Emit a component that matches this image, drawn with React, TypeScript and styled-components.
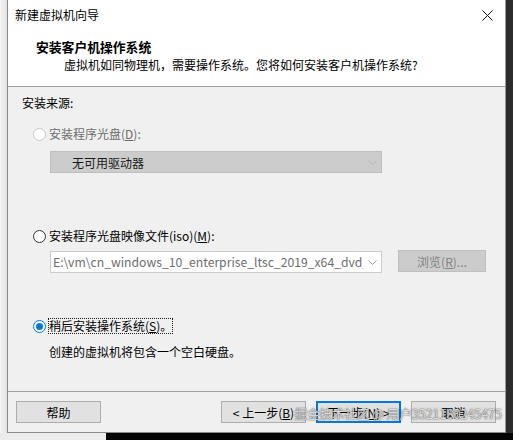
import React, {useState} from 'react'
import styled, {createGlobalStyle} from 'styled-components'

const GlobalStyle = createGlobalStyle`
  html, body {
    margin: 0;
    padding: 0;
    background: #1b1b1b;
  }
  body {
    font-family: "Segoe UI", "Noto Sans CJK SC", "Liberation Sans", sans-serif;
    font-size: 12px;
    color: #000;
  }
`

const ScreenStl = styled.div`
  width: 513px;
  height: 440px;
  display: grid;
  grid-template-columns: 7px 499px 1fr;
  grid-template-rows: 433px 1fr;
  overflow: hidden;
  position: relative;
`

const LeftShadeStl = styled.div`
  background: linear-gradient(to right, #f3f3f3, #e4e4e4);
`

const RightDeskStl = styled.div`
  background: #2c2c2c;
`

const BottomStripStl = styled.div`
  grid-column: 1 / 4;
  display: flex;
`

const BottomPartStl = styled.div<{light?: boolean; w?: number}>`
  flex: ${({w}) => (w ? `0 0 ${w}px` : '1')};
  background: ${({light}) => (light ? '#ececec' : '#050505')};
`

const WindowStl = styled.div`
  display: flex;
  flex-direction: column;
  border-left: 1px solid #8a8a8a;
  border-right: 1px solid #9a9a9a;
  border-bottom: 1px solid #8a8a8a;
  background: #f0f0f0;
`

const HeaderStl = styled.div`
  background: #fff;
  border-bottom: 1px solid #a0a0a0;
  height: 87px;
  box-sizing: border-box;
  display: flex;
  flex-direction: column;
`

const TitleBarStl = styled.div`
  height: 29px;
  display: flex;
  align-items: center;
  justify-content: space-between;
  padding: 0 10px 0 7px;
`

const TitleTextStl = styled.span`
  line-height: 16px;
`

const CloseStl = styled.div`
  width: 16px;
  height: 16px;
  display: flex;
  align-items: center;
  justify-content: center;
  margin-top: 1px;
`

const HeadTitleStl = styled.div`
  font-weight: 700;
  font-size: 12.8px;
  line-height: 16px;
  padding-left: 28px;
  margin-top: 10px;
`

const HeadSubStl = styled.div`
  line-height: 16px;
  padding-left: 56px;
  margin-top: 2px;
`

const BodyStl = styled.div`
  flex: 1;
  padding: 8px 0 0 14px;
  display: flex;
  flex-direction: column;
  border-bottom: 1px solid #a0a0a0;
`

const LegendStl = styled.div`
  line-height: 16px;
`

const OptionStl = styled.div<{gap: number}>`
  margin-top: ${({gap}) => gap}px;
  padding-left: 11px;
  display: flex;
  flex-direction: column;
`

const RadioRowStl = styled.label<{disabled?: boolean}>`
  display: flex;
  align-items: center;
  height: 16px;
  gap: 3px;
  color: ${({disabled}) => (disabled ? '#6d6d6d' : '#000')};
`

const RadioDotStl = styled.span<{checked?: boolean; disabled?: boolean}>`
  width: 13px;
  height: 13px;
  box-sizing: border-box;
  border-radius: 50%;
  background: #fff;
  border: 1px solid ${({checked, disabled}) => (disabled ? '#c8c8c8' : checked ? '#0078d7' : '#333')};
  display: flex;
  align-items: center;
  justify-content: center;
  &::after {
    content: '';
    width: 7px;
    height: 7px;
    border-radius: 50%;
    background: ${({checked}) => (checked ? '#0078d7' : 'transparent')};
  }
`

const LabelTextStl = styled.span<{focused?: boolean}>`
  line-height: 14px;
  outline: ${({focused}) => (focused ? '1px dotted #222' : 'none')};
  outline-offset: 0;
`

const KeyStl = styled.span`
  text-decoration: underline;
  text-underline-offset: 1px;
`

const FieldRowStl = styled.div<{gap: number}>`
  margin-top: ${({gap}) => gap}px;
  padding-left: 28px;
  display: flex;
  align-items: center;
  gap: 16px;
`

const ComboStl = styled.div<{disabled?: boolean}>`
  width: 332px;
  height: 22px;
  box-sizing: border-box;
  border: 1px solid ${({disabled}) => (disabled ? '#bfbfbf' : '#cccccc')};
  background: ${({disabled}) => (disabled ? '#cccccc' : '#ffffff')};
  display: flex;
  align-items: center;
  justify-content: space-between;
  overflow: hidden;
`

const ComboTextStl = styled.span<{indent: number; muted?: boolean}>`
  padding-left: ${({indent}) => indent}px;
  white-space: nowrap;
  overflow: hidden;
  flex: 1;
  color: ${({muted}) => (muted ? '#6d6d6d' : '#1a1a1a')};
  font-size: ${({muted}) => (muted ? '12.2px' : '12px')};
`

const ChevronStl = styled.span`
  flex: 0 0 18px;
  height: 20px;
  display: flex;
  align-items: center;
  justify-content: center;
`

const BrowseStl = styled.button`
  width: 88px;
  height: 22px;
  margin-top: -2px;
  box-sizing: border-box;
  border: 1px solid #bfbfbf;
  background: #cccccc;
  color: #838383;
  font: inherit;
  padding: 0;
`

const NoteStl = styled.div`
  margin-top: 10px;
  padding-left: 27px;
  line-height: 16px;
`

const FooterStl = styled.div`
  height: 40px;
  box-sizing: border-box;
  padding: 9px 9px 0 8px;
  display: flex;
  align-items: flex-start;
`

const ButtonStl = styled.button<{primary?: boolean}>`
  width: 85px;
  height: 22px;
  box-sizing: border-box;
  border: 1px solid ${({primary}) => (primary ? '#0078d7' : '#adadad')};
  box-shadow: ${({primary}) => (primary ? 'inset 0 0 0 1px #0078d7' : 'none')};
  background: #e1e1e1;
  font: inherit;
  color: #000;
  padding: 0;
  margin-left: ${({primary}) => (primary ? '10px' : '0')};
`

const SpacerStl = styled.div`
  flex: 1;
`

const CancelStl = styled(ButtonStl)`
  margin-left: 10px;
`

const WatermarkStl = styled.div`
  position: absolute;
  right: 11px;
  top: 405px;
  font-size: 12.5px;
  line-height: 18px;
  color: rgba(235, 235, 235, 0.9);
  text-shadow: 0 0 1px rgba(40, 40, 40, 0.8), 0 0 2px rgba(40, 40, 40, 0.5);
  white-space: nowrap;
  pointer-events: none;
`

const Chevron = ({color}: {color: string}) => (
    <svg width="9" height="5" viewBox="0 0 9 5">
        <path d="M0.5 0.5 L4.5 4.5 L8.5 0.5" fill="none" stroke={color} strokeWidth="1"/>
    </svg>
)

export default function App() {
    const [source, setSource] = useState<string>('later')

    return (
        <ScreenStl>
            <GlobalStyle/>
            <LeftShadeStl/>
            <WindowStl>
                <HeaderStl>
                    <TitleBarStl>
                        <TitleTextStl>新建虚拟机向导</TitleTextStl>
                        <CloseStl>
                            <svg width="11" height="11" viewBox="0 0 11 11">
                                <path d="M0.5 0.5 L10.5 10.5 M10.5 0.5 L0.5 10.5" stroke="#111" strokeWidth="1"/>
                            </svg>
                        </CloseStl>
                    </TitleBarStl>
                    <HeadTitleStl>安装客户机操作系统</HeadTitleStl>
                    <HeadSubStl>虚拟机如同物理机，需要操作系统。您将如何安装客户机操作系统?</HeadSubStl>
                </HeaderStl>

                <BodyStl>
                    <LegendStl>安装来源:</LegendStl>

                    <OptionStl gap={15}>
                        <RadioRowStl disabled>
                            <RadioDotStl disabled/>
                            <LabelTextStl>安装程序光盘(<KeyStl>D</KeyStl>):</LabelTextStl>
                        </RadioRowStl>
                    </OptionStl>
                    <FieldRowStl gap={9}>
                        <ComboStl disabled>
                            <ComboTextStl indent={21}>无可用驱动器</ComboTextStl>
                            <ChevronStl><Chevron color="#b5b5b5"/></ChevronStl>
                        </ComboStl>
                    </FieldRowStl>

                    <OptionStl gap={55}>
                        <RadioRowStl onClick={() => setSource('iso')}>
                            <RadioDotStl checked={source === 'iso'}/>
                            <LabelTextStl>安装程序光盘映像文件(iso)(<KeyStl>M</KeyStl>):</LabelTextStl>
                        </RadioRowStl>
                    </OptionStl>
                    <FieldRowStl gap={7}>
                        <ComboStl>
                            <ComboTextStl indent={2} muted>E:\vm\cn_windows_10_enterprise_ltsc_2019_x64_dvd_9</ComboTextStl>
                            <ChevronStl><Chevron color="#9a9a9a"/></ChevronStl>
                        </ComboStl>
                        <BrowseStl disabled>浏览(<KeyStl>R</KeyStl>)...</BrowseStl>
                    </FieldRowStl>

                    <OptionStl gap={45}>
                        <RadioRowStl onClick={() => setSource('later')}>
                            <RadioDotStl checked={source === 'later'}/>
                            <LabelTextStl focused>稍后安装操作系统(<KeyStl>S</KeyStl>)。</LabelTextStl>
                        </RadioRowStl>
                    </OptionStl>
                    <NoteStl>创建的虚拟机将包含一个空白硬盘。</NoteStl>
                </BodyStl>

                <FooterStl>
                    <ButtonStl>帮助</ButtonStl>
                    <SpacerStl/>
                    <ButtonStl>&lt; 上一步(<KeyStl>B</KeyStl>)</ButtonStl>
                    <ButtonStl primary>下一步(<KeyStl>N</KeyStl>) &gt;</ButtonStl>
                    <CancelStl>取消</CancelStl>
                </FooterStl>
            </WindowStl>
            <RightDeskStl/>
            <BottomStripStl>
                <BottomPartStl light w={106}/>
                <BottomPartStl/>
            </BottomStripStl>
            <WatermarkStl>掘金技术社区 @ 用户3521180245475</WatermarkStl>
        </ScreenStl>
    )
}
